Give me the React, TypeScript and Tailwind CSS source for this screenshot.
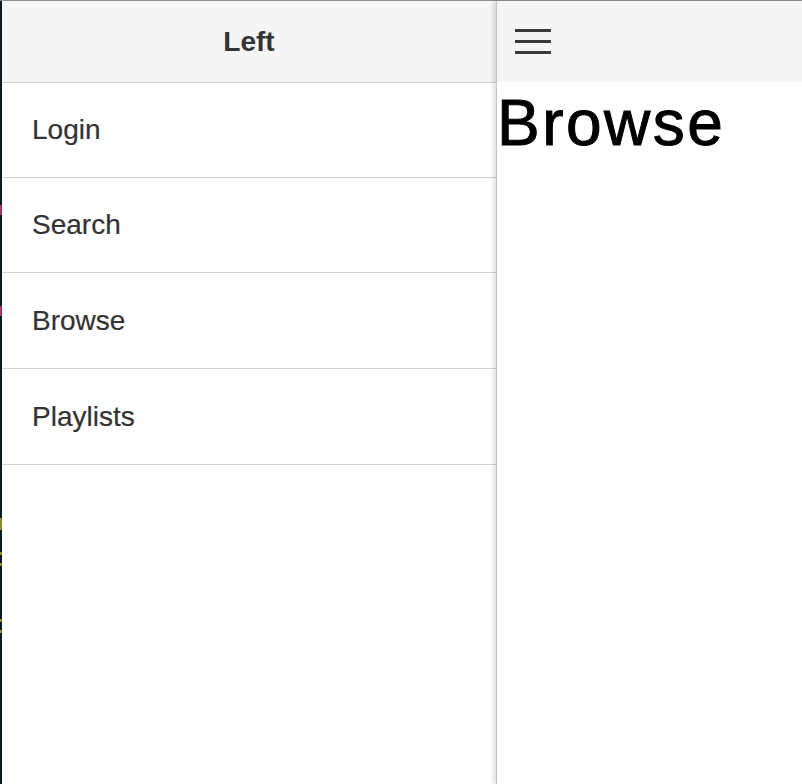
const menuItems = [
  { label: 'Login', h: 'h-[95px]' },
  { label: 'Search', h: 'h-[95px]' },
  { label: 'Browse', h: 'h-[96px]' },
  { label: 'Playlists', h: 'h-[96px]' },
]

// bits of the editor behind the window that peek out on the left edge
const specks = [
  { top: 'top-[204px]', h: 'h-[10px]', color: 'bg-[#b0306a]' },
  { top: 'top-[305px]', h: 'h-[10px]', color: 'bg-[#b0306a]' },
  { top: 'top-[517px]', h: 'h-[12px]', color: 'bg-[#8a8a20]' },
  { top: 'top-[551px]', h: 'h-[3px]', color: 'bg-[#8a8a20]' },
  { top: 'top-[562px]', h: 'h-[3px]', color: 'bg-[#8a8a20]' },
  { top: 'top-[618px]', h: 'h-[3px]', color: 'bg-[#8a8a20]' },
  { top: 'top-[629px]', h: 'h-[3px]', color: 'bg-[#8a8a20]' },
]

const App = () => {
  return (
    <div
      className="w-[802px] h-[784px] flex flex-col bg-white overflow-hidden"
      style={{ fontFamily: '"Liberation Sans", Arial, sans-serif' }}
    >
      {/* window top edge */}
      <div className="h-px bg-[#8e8e8e] shrink-0" />

      <div className="flex flex-1 min-h-0">
        {/* dark strip */}
        <div className="relative w-[2px] bg-[#0b1b22] shrink-0">
          {specks.map((s, i) => (
            <div key={i} className={`absolute left-0 w-[2px] ${s.top} ${s.h} ${s.color}`} />
          ))}
        </div>

        {/* Left menu */}
        <div className="w-[494px] shrink-0 flex flex-col bg-white">
          <div className="h-[82px] shrink-0 bg-[#f5f5f5] border-b border-[#d2d2d2] flex items-center justify-center">
            <span className="text-[28px] font-bold text-[#333] leading-none">Left</span>
          </div>
          {menuItems.map((item) => (
            <div
              key={item.label}
              className={`${item.h} shrink-0 border-b border-[#d2d2d2] flex items-center pl-[30px]`}
            >
              <span className="text-[28px] text-[#333] leading-none [-webkit-text-stroke:0.2px_#333]">{item.label}</span>
            </div>
          ))}
        </div>

        {/* Right content */}
        <div className="relative z-10 flex-1 flex flex-col bg-white border-l border-[#c4c4c4] shadow-[-3px_0_4px_rgba(0,0,0,0.12)]">
          <div className="h-[81px] shrink-0 bg-[#f5f5f5] flex items-center pl-[18px]">
            <div className="flex flex-col gap-[8px]">
              <div className="w-[36px] h-[3px] bg-[#3a3a3a]" />
              <div className="w-[36px] h-[3px] bg-[#3a3a3a]" />
              <div className="w-[36px] h-[3px] bg-[#3a3a3a]" />
            </div>
          </div>
          <h1 className="mt-[9px] text-[64px] leading-none font-normal text-black tracking-[2.5px] [-webkit-text-stroke:1px_black]">
            Browse
          </h1>
        </div>
      </div>
    </div>
  )
}

export default App
